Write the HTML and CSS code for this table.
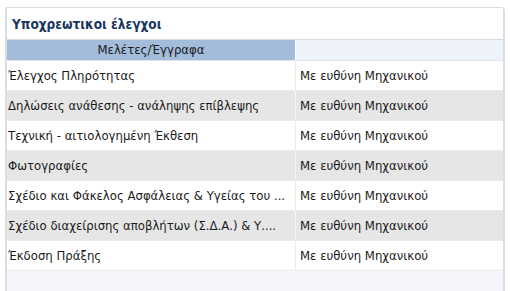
FILE: index.html
```html
<!DOCTYPE html>
<html lang="el">
<head>
<meta charset="utf-8">
<title>Υποχρεωτικοι έλεγχοι</title>
<link rel="stylesheet" href="styles.css">
</head>
<body>
<div class="panel">
  <div class="title">Υποχρεωτικοι έλεγχοι</div>
  <div class="grid">
    <div class="hcell hleft">Μελέτες/Έγγραφα</div>
    <div class="hcell hright"></div>

    <div class="cell c1">Έλεγχος Πληρότητας</div>
    <div class="cell c2">Με ευθύνη Μηχανικού</div>

    <div class="cell c1 alt">Δηλώσεις ανάθεσης - ανάληψης επίβλεψης</div>
    <div class="cell c2 alt">Με ευθύνη Μηχανικού</div>

    <div class="cell c1">Τεχνική - αιτιολογημένη Έκθεση</div>
    <div class="cell c2">Με ευθύνη Μηχανικού</div>

    <div class="cell c1 alt">Φωτογραφίες</div>
    <div class="cell c2 alt">Με ευθύνη Μηχανικού</div>

    <div class="cell c1">Σχέδιο και Φάκελος Ασφάλειας &amp; Υγείας του ...</div>
    <div class="cell c2">Με ευθύνη Μηχανικού</div>

    <div class="cell c1 alt">Σχέδιο διαχείρισης αποβλήτων (Σ.Δ.Α.) &amp; Υ....</div>
    <div class="cell c2 alt">Με ευθύνη Μηχανικού</div>

    <div class="cell c1">Έκδοση Πράξης</div>
    <div class="cell c2">Με ευθύνη Μηχανικού</div>
  </div>
  <div class="footer"></div>
</div>
</body>
</html>
```
FILE: styles.css
```css
html, body {
  margin: 0;
  padding: 0;
  background: #ffffff;
}
body {
  font-family: "DejaVu Sans Condensed", "DejaVu Sans", sans-serif;
  font-size: 13px;
  color: #1a1a1a;
  padding: 7px 5px 0 5px;
  width: 500px;
}
.panel {
  border: 1px solid #d8dee7;
  border-left-width: 2px;
  border-right-width: 2px;
  border-bottom: none;
  border-top-right-radius: 4px;
  border-top-left-radius: 2px;
  height: 290px;
  display: flex;
  flex-direction: column;
  background: #f5f6fb;
}
.title {
  height: 29px;
  line-height: 29px;
  padding-top: 2px;
  padding-left: 5px;
  font-weight: bold;
  font-size: 13.5px;
  color: #17375e;
  background: #ffffff;
  border-bottom: 1px solid #d3dae3;
}
.grid {
  display: grid;
  grid-template-columns: 289px 1fr;
}
.hcell {
  height: 20px;
  line-height: 20px;
  border-bottom: 1px solid #dfe4ec;
}
.hleft {
  background: #a2bcd9;
  text-align: center;
  color: #1a1a1a;
  border-right: 1px solid #ffffff;
}
.hright {
  background: #eef2f9;
}
.cell {
  height: 29px;
  line-height: 30px;
  background: #ffffff;
  border-bottom: 1px solid #ebebeb;
  white-space: nowrap;
  overflow: hidden;
}
.c1 {
  padding-left: 1px;
  border-right: 1px solid #ebebeb;
}
.c2 {
  padding-left: 4px;
}
.alt {
  background: #e6e6e6;
}
.c1.alt {
  border-right-color: #f7f7f7;
}
.footer {
  flex: 1;
  background: #f5f6fb;
}
```
